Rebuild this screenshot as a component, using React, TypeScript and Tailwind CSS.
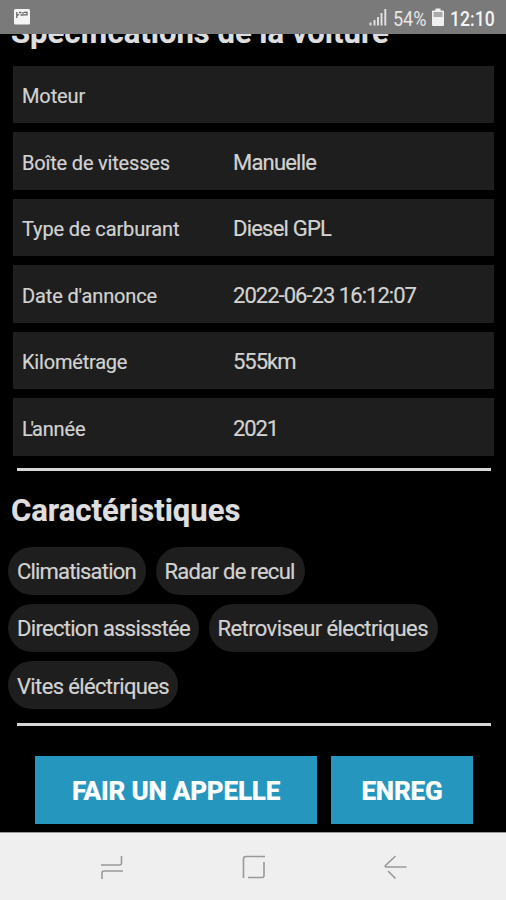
const specs = [
  { label: "Moteur", value: "", ls: "tracking-[-0.100px]", vs: "" },
  { label: "Boîte de vitesses", value: "Manuelle", ls: "tracking-[-0.190px]", vs: "tracking-[-0.800px]" },
  { label: "Type de carburant", value: "Diesel GPL", ls: "tracking-[-0.130px]", vs: "tracking-[-0.780px]" },
  { label: "Date d'annonce", value: "2022-06-23 16:12:07", ls: "tracking-[-0.130px]", vs: "tracking-[-0.970px]" },
  { label: "Kilométrage", value: "555km", ls: "tracking-[-0.200px]", vs: "tracking-[-1px]" },
  { label: "L'année", value: "2021", ls: "tracking-[-0.100px] first-letter:tracking-[-2.200px]", vs: "tracking-[-1.100px]" },
];

const features = [
  [
    { name: "Climatisation", width: "w-[138px]", ls: "tracking-[-0.820px]" },
    { name: "Radar de recul", width: "w-[149px]", ls: "tracking-[-0.720px]" },
  ],
  [
    { name: "Direction assisstée", width: "w-[191px]", ls: "tracking-[-0.700px]" },
    { name: "Retroviseur électriques", width: "w-[229px]", ls: "tracking-[-0.590px]" },
  ],
  [{ name: "Vites éléctriques", width: "w-[170px]", ls: "tracking-[-0.640px]" }],
];

function StatusBar() {
  return (
    <header className="z-10 flex h-[34px] shrink-0 items-center bg-[#7a7a7a] text-[#e6e6e6]">
      <svg className="ml-[14px] size-4" viewBox="0 0 16 16">
        <rect width="16" height="15.5" rx="1.5" fill="#f5f5f5" />
        <path d="M2.800 3v6M2.800 6.800 5 5.300M5 3.500h2.500M6.500 6h1.500M9 3v4M10 3.300h3v2.500h-3" fill="none" stroke="#666" strokeWidth="1.300" />
      </svg>
      <svg className="ml-auto h-[18px] w-[18px]" viewBox="0 0 18 18">
        <path d="M1.500 14.500v3M5.500 12v5.500M9 9v8.500M12.500 5v12.500M16.300 1v16.500" stroke="#e2e2e2" strokeWidth="1.900" />
      </svg>
      <span className="ml-[6px] mt-[3px] w-[34px] origin-left scale-x-[0.9] whitespace-nowrap text-[20px] leading-6">54%</span>
      <svg className="ml-[5px] h-[19px] w-[12px]" viewBox="0 0 12 19">
        <path d="M1 2.500h2.500V.5h5v2H11a1 1 0 0 1 1 1V17a1 1 0 0 1-1 1H1a1 1 0 0 1-1-1V3.500a1 1 0 0 1 1-1Z" fill="#f0f0f0" />
        <path d="M1.500 4h9v5h-9z" fill="#aaa" />
      </svg>
      <span className="ml-[6px] mt-[3px] w-[56px] origin-left scale-x-[0.88] whitespace-nowrap text-[20px] font-medium leading-6 text-[#f4f4f4]">12:10</span>
    </header>
  );
}

function NavBar() {
  return (
    <nav className="flex h-[68px] shrink-0 items-center border-t border-[#999] bg-[#efefef]">
      <svg className="ml-[99px] mt-[1px] size-6" viewBox="0 0 24 24" fill="none" stroke="#999" strokeWidth="1.600">
        <path d="M2 10h18.500q2 0 2-2V1M24 16H5q-2 0-2 2v7" />
      </svg>
      <svg className="ml-[118px] mt-[1px] size-6" viewBox="0 0 24 24" fill="none" stroke="#999" strokeWidth="1.600">
        <path d="M2.500 23V4q0-2.500 2.500-2.500H24M7 22.500h14q2 0 2-2V7" />
      </svg>
      <svg className="ml-[118px] mt-[1px] size-6" viewBox="0 0 24 24" fill="none" stroke="#999" strokeWidth="1.600">
        <path d="M12.500 1 2.500 10.500q-1 1.500 1 1.500H23.500M5 16l7.500 7.500" />
      </svg>
    </nav>
  );
}

export default function App() {
  return (
    <div className="flex h-[900px] w-[506px] flex-col overflow-hidden bg-black font-['Roboto',sans-serif] text-[#d2d2d2]">
      <StatusBar />
      <main className="flex min-h-0 flex-1 flex-col overflow-hidden [-webkit-text-stroke:0.2px]">
        <h2 className="-mt-[19px] ml-[11px] h-[39px] whitespace-nowrap text-[31px] font-bold leading-[36px] text-[#dedede]">
          Spécifications de la voiture
        </h2>
        <section className="ml-[13px] mr-[12px] mt-[12px] flex flex-col gap-[9.100px] text-[20px]">
          {specs.map((s) => (
            <div key={s.label} className="flex h-[57.400px] items-center bg-[#1e1e1e] pl-[9px]">
              <span className={`block w-[211px] whitespace-nowrap pt-[2.800px] ${s.ls}`}>{s.label}</span>
              <span className={`whitespace-nowrap pt-[2px] text-[22px] ${s.vs}`}>{s.value}</span>
            </div>
          ))}
        </section>
        <hr className="ml-[17px] mt-[12px] h-[3px] w-[474px] shrink-0 border-0 bg-[#d6d6d6]" />
        <h2 className="ml-[11px] mt-[22px] h-[35px] whitespace-nowrap text-[31px] font-bold leading-[36px] text-[#dedede]">
          Caractéristiques
        </h2>
        <section className="ml-[8px] mt-[19px] flex flex-col gap-[9.500px]">
          {features.map((row, i) => (
            <div key={i} className="flex gap-[9.500px]">
              {row.map((f) => (
                <span key={f.name} className={`flex h-[47.700px] items-center whitespace-nowrap rounded-full bg-[#1e1e1e] pl-[9px] pt-[2px] text-[22px] ${f.ls} ${f.width}`}>
                  {f.name}
                </span>
              ))}
            </div>
          ))}
        </section>
        <hr className="ml-[17px] mt-[14px] h-[3px] w-[474px] shrink-0 border-0 bg-[#d6d6d6]" />
        <div className="ml-[35px] mt-[30px] flex gap-[14px] text-[26px] font-extrabold tracking-[-0.200px] text-white">
          <button className="h-[68px] w-[282px] whitespace-nowrap bg-[#2596be] pt-[3px]">FAIR UN APPELLE</button>
          <button className="h-[68px] w-[142px] whitespace-nowrap bg-[#2596be] pt-[3px]">ENREG</button>
        </div>
      </main>
      <NavBar />
    </div>
  );
}
